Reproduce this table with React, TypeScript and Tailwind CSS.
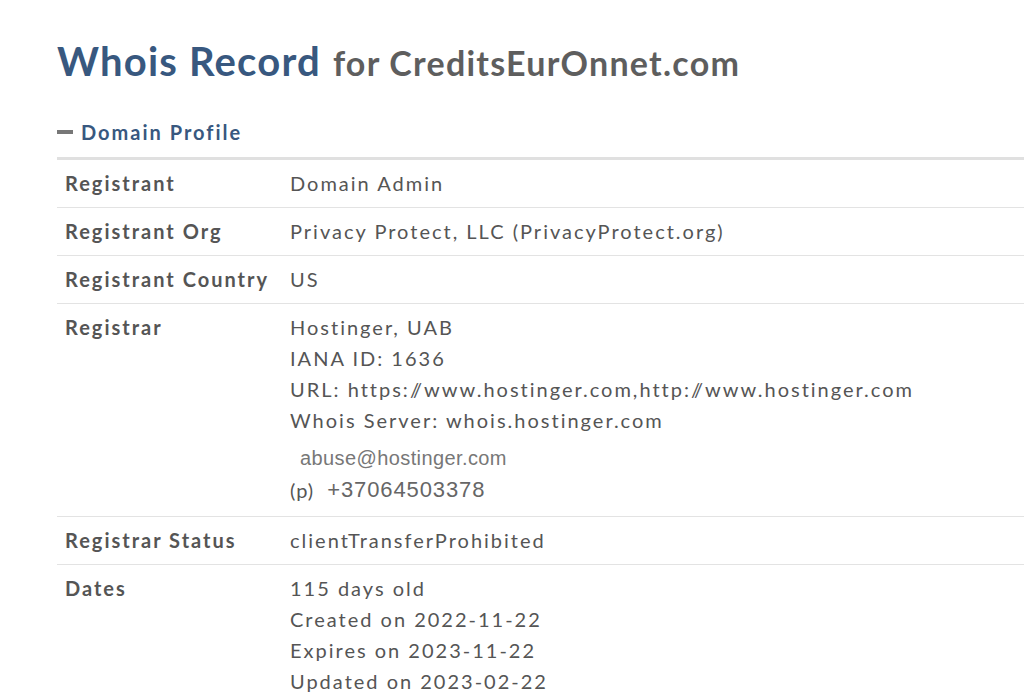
const rows: { label: string; lines: string[] }[] = [
  { label: 'Registrant', lines: ['Domain Admin'] },
  { label: 'Registrant Org', lines: ['Privacy Protect, LLC (PrivacyProtect.org)'] },
  { label: 'Registrant Country', lines: ['US'] },
]

function Row({ label, children }: { label: string; children: React.ReactNode }) {
  return (
    <div className="flex border-b border-[#e3e3e3] py-2">
      <div className="w-[233px] shrink-0 pl-2 text-[20px] leading-[31px] font-bold tracking-[2px] text-[#555]">
        {label}
      </div>
      <div className="text-[20px] leading-[31px] tracking-[2px] text-[#555]">{children}</div>
    </div>
  )
}

// the source font draws "//" tight, almost as one glyph
const Slashes = () => (
  <>
    <span className="tracking-[-6px]">/</span>/
  </>
)

export default function App() {
  return (
    <div className="min-h-[700px] bg-white pl-[57px] pt-[35px] font-['Lato',sans-serif]">
      <h1 className="flex items-baseline gap-3 leading-[52px]">
        <span className="text-[40px] font-bold tracking-[1.2px] text-[#38587f]">Whois Record</span>
        <span className="text-[34px] font-bold tracking-[1.25px] text-[#5e5e5e]">for CreditsEurOnnet.com</span>
      </h1>

      <div className="mt-[28px] flex items-center gap-2 pb-[10px]">
        <span className="h-[4px] w-[16px] bg-[#777]" />
        <span className="text-[20px] font-bold tracking-[2px] text-[#38587f]">Domain Profile</span>
      </div>
      <div className="h-[3px] bg-[#e0e0e0]" />

      {rows.map((r) => (
        <Row key={r.label} label={r.label}>
          {r.lines.map((l) => (
            <div key={l}>{l}</div>
          ))}
        </Row>
      ))}

      <Row label="Registrar">
        <div>Hostinger, UAB</div>
        <div>IANA ID: 1636</div>
        <div>
          URL: https:<Slashes />www.hostinger.com,http:<Slashes />www.hostinger.com
        </div>
        <div>Whois Server: whois.hostinger.com</div>
        <div className="mt-[6px] pl-[10px] font-['Liberation_Sans',sans-serif] text-[20px] leading-[32px] tracking-[0.4px] text-[#777]">
          abuse@hostinger.com
        </div>
        <div className="mb-[2px] flex items-center gap-[13px] leading-[32px]">
          <span className="text-[20px] tracking-[1px]">(p)</span>
          <span className="font-['Liberation_Sans',sans-serif] text-[22px] tracking-[0.9px] text-[#666]">+37064503378</span>
        </div>
      </Row>

      <Row label="Registrar Status">
        <div>clientTransferProhibited</div>
      </Row>

      <Row label="Dates">
        <div>115 days old</div>
        <div>Created on 2022-11-22</div>
        <div>Expires on 2023-11-22</div>
        <div>Updated on 2023-02-22</div>
      </Row>
    </div>
  )
}
